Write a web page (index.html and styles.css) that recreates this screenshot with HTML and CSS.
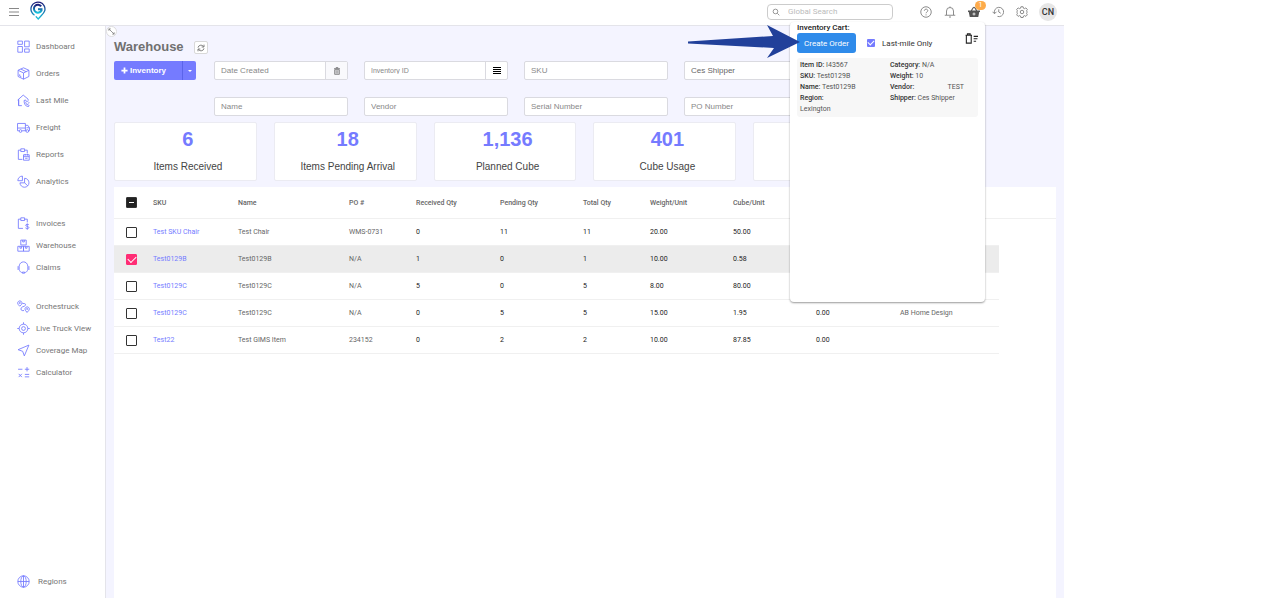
FILE: index.html
```html
<!DOCTYPE html>
<html lang="en">
<head>
    <meta charset="UTF-8">
    <meta name="viewport" content="width=device-width, initial-scale=1.0">
    <title>Warehouse</title>
    <link rel="stylesheet" href="styles.css">
</head>
<body>
    <div class="app">
        <header class="topbar">
            <button class="icon-btn menu-btn" aria-label="Menu">
                <svg viewBox="0 0 12 12"><path d="M1 2.500h10M1 6h10M1 9.500h10"/></svg>
            </button>
            <a href="#" class="logo" aria-label="Home">
                <svg viewBox="0 0 16 19">
                    <defs>
                        <linearGradient id="logoFill" x1="0" y1="0" x2="0" y2="1">
                            <stop offset="0" stop-color="#1d1a78"/>
                            <stop offset="0.5" stop-color="#1668a8"/>
                            <stop offset="1" stop-color="#16c4dc"/>
                        </linearGradient>
                    </defs>
                    <g fill="none" stroke="url(#logoFill)">
                        <path stroke-width="1.3" d="M4.500 14.200 A7 7 0 1 1 14.800 9.600 C14 12.600 11 14.600 8.200 18 L5.800 15.400"/>
                        <path stroke-width="2" d="M11.200 5.400 A4 4 0 1 0 11.500 9.500 L11.500 8.200 L8 8.200"/>
                    </g>
                </svg>
            </a>
            <div class="search">
                <svg viewBox="0 0 12 12"><circle cx="5.200" cy="5.200" r="3.500"/><path d="M8 8l3 3"/></svg>
                <input type="search" placeholder="Global Search" aria-label="Global Search">
            </div>
            <nav class="tools">
                <button class="icon-btn" aria-label="Help">
                    <svg viewBox="0 0 24 24"><circle cx="12" cy="12" r="10.500"/><path d="M8.700 9.500c0-4.500 6.800-4.200 6.800-.2 0 2.700-3.400 2.600-3.400 5.200M12.100 16.800v2"/></svg>
                </button>
                <button class="icon-btn" aria-label="Notifications">
                    <svg viewBox="0 0 24 24"><path d="M12 1v2M5 18v-8a7 7 0 0 1 14 0v8M1.500 18.500h21M10 22h4"/></svg>
                </button>
                <button class="icon-btn basket" aria-label="Inventory cart">
                    <svg viewBox="0 0 24 24"><path fill="#555" stroke="none" d="M5.500 9 10.500 1.500 12.300 2.700 8.200 9h7.600L11.700 2.700 13.500 1.500 18.500 9H24v3h-1.500L20.500 22h-17L1.500 12H0V9z"/><path stroke="#fff" d="M12 13v6M9 16h6"/></svg>
                    <span class="badge">1</span>
                </button>
                <button class="icon-btn" aria-label="History">
                    <svg viewBox="0 0 24 24"><path d="M5 14.500A9.300 9.300 0 1 1 11 20.800M1 11.500l4 4 4-4M13.500 6.500V12l4 2.500"/></svg>
                </button>
                <button class="icon-btn" aria-label="Settings">
                    <svg viewBox="0 0 24 24"><circle cx="12" cy="12" r="3.500"/><path d="M9.800 1.500h4.400l.8 3 2 .8 2.700-1.500 3 3-1.500 2.700.8 2v1.500l-.8 2 1.500 2.700-3 3-2.700-1.500-2 .8-.8 3H9.800l-.8-3-2-.8-2.700 1.500-3-3L2.800 15 2 13v-1.500l.8-2-1.500-2.700 3-3L7 5.300l2-.8z"/></svg>
                </button>
                <button class="avatar">CN</button>
            </nav>
        </header>

        <aside class="sidebar">
            <ul class="nav nav-main">
                <li><a href="#"><svg viewBox="0 0 24 24"><path d="M1.500 2h8.500v6H1.500zM1.500 12h8.500v10.500H1.500zM14 2h8.500v10.500H14zM14 16.500h8.500v6H14z"/></svg>Dashboard</a></li>
                <li><a href="#"><svg viewBox="0 0 24 24"><path d="M12 1.500l10 4.500v11.500l-10 5-10-5V6zM2 6l10 5 10-5M12 11v11.500M7 3.700l10 5M5 13.500v3l3 1.500"/></svg>Orders</a></li>
                <li><a href="#"><svg viewBox="0 0 24 24"><path d="M9 21.500H3v-11L1.500 11 11.500 2l9 7.500V12M3 21.500V10M13 12l3-1 1.500 3.500-1.500 1.500 2.500 4 2-.5 2 2.500-2.500 1.500c-4-1-7-5-7-11.500zM19 14l2-1M20 17l3-1"/></svg>Last Mile</a></li>
                <li><a href="#"><svg viewBox="0 0 24 24"><path d="M1 4.500h14.500V18H9.500M3.500 18H1V4.500M15.500 8h4.500l3 4.500V18h-1.500M15.500 18H17M1 13h14.500M17.500 12.500H23"/><circle cx="6.500" cy="18.500" r="2.500"/><circle cx="19" cy="18.500" r="2.500"/></svg>Freight</a></li>
                <li><a href="#"><svg viewBox="0 0 24 24"><path d="M10 21H2.500V4H7M14 4h5v6M7 1.500h7v5H7zM12 12.500h10.500v10H12zM12 16h10.500M15 11v3M19.500 11v3M15 19h4.500"/></svg>Reports</a></li>
                <li><a href="#"><svg viewBox="0 0 24 24"><path d="M14 6a8.300 8.300 0 1 1-8.500 8.500L14 14.500zM10 10.500V2a8.500 8.500 0 0 0-8.500 8.500zM14 14.500l6 5.500"/></svg>Analytics</a></li>
            </ul>
            <ul class="nav">
                <li><a href="#"><svg viewBox="0 0 24 24"><path d="M11 21H2.500V4H7M14 4h5v6M7 1.500h7v5H7zM22 14.500c-1-1.500-6-1.500-6 .8 0 2.500 6 1.500 6 4.200 0 2.500-5 2.500-6.500.5M19 12v11.500"/></svg>Invoices</a></li>
                <li><a href="#"><svg viewBox="0 0 24 24"><path d="M7 2h10v9H7zM1.500 13.500H12v9H1.500zM12 13.500h10.500v9H12zM10.500 2v3.500h3V2M5.500 13.500V17h3v-3.500M15.500 13.500V17h3v-3.500"/></svg>Warehouse</a></li>
                <li><a href="#"><svg viewBox="0 0 24 24"><path d="M4 9.500C5 -1 19 -1 20 9.500M4 9.500v7M2 9.500v7M20 9.500v7M22 9.500v7M4.500 17c1 3 3 4 5.500 4.500M19.500 17c-1 3-3 4-5.500 4.500M10 20.500h4v2h-4z"/></svg>Claims</a></li>
            </ul>
            <ul class="nav">
                <li><a href="#"><svg viewBox="0 0 24 24"><path d="M5 11.500 2 8a4 4 0 1 1 6.500 0zM18.500 23l-3-4a4 4 0 1 1 6.500 0zM10 6.500h3.500c3 0 3 4 0 5l-4 1.500c-3 1.500-3 6 0 6.500H13"/><circle cx="5.200" cy="5.500" r="1"/><circle cx="18.700" cy="16.500" r="1"/></svg>Orchestruck</a></li>
                <li><a href="#"><svg viewBox="0 0 24 24"><circle cx="12" cy="12" r="8"/><circle cx="12" cy="12" r="3.500"/><path d="M12 .5V4M12 20v3.500M.5 12H4M20 12h3.500"/></svg>Live Truck View</a></li>
                <li><a href="#"><svg viewBox="0 0 24 24"><path d="M22 2 2 10.500l8.500 3L13.500 22z"/></svg>Coverage Map</a></li>
                <li><a href="#"><svg viewBox="0 0 24 24"><path d="M2 6h8M14.500 6h8M18.500 2v8M3 14.500l6 6M9 14.500l-6 6M14.500 15.500h8M14.500 20h8"/></svg>Calculator</a></li>
            </ul>
            <ul class="nav nav-bottom">
                <li><a href="#"><svg viewBox="0 0 24 24"><circle cx="12" cy="12" r="10.500"/><ellipse cx="12" cy="12" rx="5" ry="10.500"/><path d="M1.500 12h21M12 1.500v21"/></svg>Regions</a></li>
            </ul>
        </aside>

        <main class="content">
            <button class="collapse" aria-label="Collapse sidebar">
                <svg viewBox="0 0 12 12"><path d="M2.500 5V2.500H5M2.500 2.500l7 7M9.500 7v2.500H7"/></svg>
            </button>
            <div class="title-row">
                <h1>Warehouse</h1>
                <button class="refresh" aria-label="Refresh">
                    <svg viewBox="0 0 12 12"><path d="M1.500 5.500a4.500 4.500 0 0 1 8-2M10.500 1v3.500H7M10.500 6.500a4.500 4.500 0 0 1-8 2M1.500 11V7.500H5"/></svg>
                </button>
            </div>

            <form class="filters">
                <div class="split-btn">
                    <button type="button" class="add"><svg viewBox="0 0 8 8"><path d="M4 .5v7M.5 4h7"/></svg>Inventory</button>
                    <button type="button" class="caret" aria-label="More inventory actions"></button>
                </div>
                <div class="field">
                    <input type="text" placeholder="Date Created" aria-label="Date Created">
                    <button type="button" class="clear" aria-label="Clear date">
                        <svg viewBox="0 0 10 12"><path d="M.5 2.500h9M3.500 2V1h3v1M1.500 4h7v7h-7zM3.700 5v5M6.300 5v5"/></svg>
                    </button>
                </div>
                <div class="field small">
                    <input type="text" placeholder="Inventory ID" aria-label="Inventory ID">
                    <button type="button" aria-label="Enter a list">
                        <svg viewBox="0 0 8 8"><path d="M0 .5h8M0 2.500h8M0 4.500h8M0 6.500h8"/></svg>
                    </button>
                </div>
                <div class="field"><input type="text" placeholder="SKU" aria-label="SKU"></div>
                <div class="field"><input type="text" value="Ces Shipper" aria-label="Shipper"></div>
                <div class="field second-row"><input type="text" placeholder="Name" aria-label="Name"></div>
                <div class="field"><input type="text" placeholder="Vendor" aria-label="Vendor"></div>
                <div class="field"><input type="text" placeholder="Serial Number" aria-label="Serial Number"></div>
                <div class="field"><input type="text" placeholder="PO Number" aria-label="PO Number"></div>
            </form>

            <section class="stats">
                <div class="stat"><strong>6</strong><span>Items Received</span></div>
                <div class="stat"><strong>18</strong><span>Items Pending Arrival</span></div>
                <div class="stat"><strong>1,136</strong><span>Planned Cube</span></div>
                <div class="stat"><strong>401</strong><span>Cube Usage</span></div>
                <div class="stat"></div>
            </section>

            <div class="table-box">
                <table>
                    <colgroup>
                        <col class="c-check"><col class="c-sku"><col class="c-name"><col class="c-po">
                        <col class="c-wide"><col class="c-num"><col class="c-po"><col class="c-num">
                        <col class="c-num"><col class="c-wide"><col class="c-vendor"><col>
                    </colgroup>
                    <thead>
                        <tr>
                            <th><input type="checkbox" class="box some" aria-label="Select all"></th>
                            <th>SKU</th><th>Name</th><th>PO #</th><th>Received Qty</th><th>Pending Qty</th>
                            <th>Total Qty</th><th>Weight/Unit</th><th>Cube/Unit</th><th></th><th></th><th></th>
                        </tr>
                    </thead>
                    <tbody>
                        <tr>
                            <td><input type="checkbox" class="box" aria-label="Select Test SKU Chair"></td>
                            <td><a href="#">Test SKU Chair</a></td><td>Test Chair</td><td>WMS-0731</td>
                            <td class="num">0</td><td class="num">11</td><td class="num">11</td><td class="num">20.00</td><td class="num">50.00</td><td></td><td></td><td></td>
                        </tr>
                        <tr class="selected">
                            <td><input type="checkbox" class="box" checked aria-label="Select Test0129B"></td>
                            <td><a href="#">Test0129B</a></td><td>Test0129B</td><td>N/A</td>
                            <td class="num">1</td><td class="num">0</td><td class="num">1</td><td class="num">10.00</td><td class="num">0.58</td><td></td><td></td><td></td>
                        </tr>
                        <tr>
                            <td><input type="checkbox" class="box" aria-label="Select Test0129C"></td>
                            <td><a href="#">Test0129C</a></td><td>Test0129C</td><td>N/A</td>
                            <td class="num">5</td><td class="num">0</td><td class="num">5</td><td class="num">8.00</td><td class="num">80.00</td><td></td><td></td><td></td>
                        </tr>
                        <tr>
                            <td><input type="checkbox" class="box" aria-label="Select Test0129C"></td>
                            <td><a href="#">Test0129C</a></td><td>Test0129C</td><td>N/A</td>
                            <td class="num">0</td><td class="num">5</td><td class="num">5</td><td class="num">15.00</td><td class="num">1.95</td><td class="num">0.00</td><td>AB Home Design</td><td></td>
                        </tr>
                        <tr>
                            <td><input type="checkbox" class="box" aria-label="Select Test22"></td>
                            <td><a href="#">Test22</a></td><td>Test GIMS Item</td><td>234152</td>
                            <td class="num">0</td><td class="num">2</td><td class="num">2</td><td class="num">10.00</td><td class="num">87.85</td><td class="num">0.00</td><td></td><td></td>
                        </tr>
                    </tbody>
                </table>
            </div>
        </main>

        <section class="cart">
            <h2>Inventory Cart:</h2>
            <div class="cart-bar">
                <button class="create">Create Order</button>
                <label class="lastmile"><input type="checkbox" checked>Last-mile Only</label>
                <button class="empty" aria-label="Empty cart">
                    <svg viewBox="0 0 24 20"><path d="M1 4h12M4.500 3V1.500h5V3M2.500 4h9v14.500h-9zM16 6h8M16 10.500h7M16 15h4.500"/></svg>
                </button>
            </div>
            <div class="cart-item">
                <div>
                    <p><b>Item ID:</b> I43567</p>
                    <p><b>SKU:</b> Test0129B</p>
                    <p><b>Name:</b> Test0129B</p>
                    <p><b>Region:</b></p>
                    <p>Lexington</p>
                </div>
                <div>
                    <p><b>Category:</b> N/A</p>
                    <p><b>Weight:</b> 10</p>
                    <p class="spread"><b>Vendor:</b> <span>TEST</span></p>
                    <p><b>Shipper:</b> Ces Shipper</p>
                </div>
            </div>
        </section>

        <svg class="pointer" viewBox="0 0 114 34"><path d="M1 16.500 L86 11 L80 0 L113 17 L80 33 L87 23 L1 18.500 Z"/></svg>
    </div>
</body>
</html>
```

FILE: styles.css
```css
:root {
    --accent: #757bff;
    --page: #f4f4ff;
    --line: #e4e4ea;
    --muted: #666;
}

* {
    box-sizing: border-box;
}

body {
    margin: 0;
    padding-right: 216px;
    background: #fff;
    color: #333;
    font-family: Roboto, sans-serif;
    font-size: 7px;
}

button,
input {
    font: inherit;
    color: inherit;
    margin: 0;
    padding: 0;
}

button {
    border: 0;
    background: none;
    cursor: pointer;
}

svg {
    display: block;
    fill: none;
    stroke: currentColor;
}

a {
    color: inherit;
    text-decoration: none;
}

h1,
h2,
p,
ul {
    margin: 0;
    padding: 0;
    list-style: none;
}

.app {
    position: relative;
    display: grid;
    grid-template-columns: 106px 1fr;
    grid-template-rows: 26px 1fr;
    min-height: 100vh;
}

/* top bar */
.topbar {
    grid-column: 1 / 3;
    display: flex;
    align-items: center;
    padding: 0 7px 2px 8px;
    border-bottom: 1px solid var(--line);
}

.icon-btn {
    position: relative;
    width: 12px;
    color: #707070;
}

.icon-btn svg {
    width: 12px;
    height: 12px;
    stroke-width: 1.6;
}

.menu-btn svg {
    stroke-width: 1;
    color: #888;
}

.logo {
    align-self: flex-start;
    margin: 1px auto 0 10px;
}

.logo svg {
    width: 16px;
    height: 19px;
}

.search {
    display: flex;
    align-items: center;
    gap: 8px;
    width: 126px;
    height: 16px;
    margin-right: 27px;
    padding: 0 4px;
    border: 1px solid #ccc;
    border-radius: 4px;
    color: #666;
}

.search svg {
    flex: none;
    width: 8px;
    height: 8px;
}

.search input {
    width: 100%;
    border: 0;
    outline: 0;
    background: none;
    font-size: 8px;
}

.search input::placeholder {
    color: #bbb;
}

.tools {
    display: flex;
    align-items: center;
    gap: 12px;
}

.badge {
    position: absolute;
    top: -5px;
    left: 7px;
    width: 11px;
    height: 9px;
    border-radius: 5px;
    background: #fdab4b;
    color: #fff;
    font-size: 7px;
    line-height: 9px;
}

.avatar {
    width: 18px;
    height: 18px;
    margin-left: -1px;
    border-radius: 50%;
    background: #e6e6e6;
    font-size: 9px;
    font-weight: 500;
}

/* side bar */
.sidebar {
    display: flex;
    flex-direction: column;
    gap: 17px;
    padding: 7px 0 6px;
    border-right: 1px solid var(--line);
    color: #777;
    font-size: 8px;
}

.nav a {
    display: flex;
    align-items: center;
    gap: 6px;
    height: 22px;
    padding-left: 17px;
}

.nav svg {
    width: 13px;
    height: 13px;
    color: var(--accent);
    stroke-width: 1.6;
}

.nav-main a {
    height: 27px;
}

.nav-bottom {
    margin-top: auto;
}

.nav-bottom a {
    gap: 8px;
}

/* page */
.content {
    position: relative;
    display: flex;
    flex-direction: column;
    padding: 14px 8px 0;
    background: var(--page);
}

.collapse {
    position: absolute;
    top: 0;
    left: 0;
    width: 11px;
    height: 11px;
    border: 1px solid #ddd;
    border-radius: 50%;
    background: #fff;
    color: #777;
}

.title-row {
    display: flex;
    align-items: center;
    gap: 10px;
    height: 14px;
    margin-bottom: 7px;
}

h1 {
    color: #707070;
    font: bold 13px/14px "Liberation Sans", Arial, sans-serif;
}

.refresh {
    width: 14px;
    height: 13px;
    padding: 2px;
    border: 1px solid #d8d8d8;
    border-radius: 2px;
    background: #fff;
    color: #444;
}

.refresh svg {
    width: 8px;
    height: 8px;
}

/* two rows of filters, the second starts under the date */
.filters {
    display: grid;
    grid-template-columns: 84px 134px repeat(3, 1fr);
    gap: 17px 16px;
    padding-right: 228px;
    font: 8px "Liberation Sans", Arial, sans-serif;
}

.second-row {
    grid-column: 2;
}

.split-btn {
    display: flex;
    width: 82px;
    height: 19px;
    border-radius: 2px;
    background: var(--accent);
    color: #fff;
    font-weight: bold;
}

.add {
    display: flex;
    flex: 1;
    align-items: center;
    gap: 2px;
    padding-left: 7px;
}

.add svg {
    width: 7px;
    height: 7px;
    stroke-width: 2;
}

.caret {
    display: grid;
    place-items: center;
    width: 14px;
    border-left: 1px solid #5b64ea;
}

.caret::after {
    content: "";
    border: 2px solid transparent;
    border-top-color: #fff;
    border-bottom: 0;
}

.field {
    display: flex;
    height: 19px;
    border: 1px solid #dadae0;
    border-radius: 2px;
    background: #fff;
    color: #666;
}

.field input {
    flex: 1;
    width: 0;
    padding: 0 6px;
    border: 0;
    outline: 0;
    background: none;
}

.field input::placeholder {
    color: #888;
}

.field.small {
    font-size: 7px;
}

.field button {
    display: grid;
    place-items: center;
    width: 22px;
    border-left: 1px solid #dadae0;
    color: #000;
}

.field button svg {
    width: 8px;
    height: 8px;
}

.field .clear {
    background: #f9f9fc;
    color: #555;
}

.stats {
    display: grid;
    grid-template-columns: repeat(6, 1fr);
    gap: 17px;
    margin: 6px 0;
    font-family: "Liberation Sans", Arial, sans-serif;
}

.stat {
    display: flex;
    flex-direction: column;
    align-items: center;
    gap: 11px;
    height: 59px;
    padding: 5px 0 0 5px;
    border: 1px solid #ebebf2;
    border-radius: 2px;
    background: #fff;
}

.stat strong {
    color: var(--accent);
    font-size: 20px;
    line-height: 22px;
}

.stat span {
    color: #444;
    font-size: 10px;
    line-height: 12px;
}

/* table */
.table-box {
    flex: 1;
    background: #fff;
}

table {
    width: 100%;
    border-collapse: separate;
    border-spacing: 0;
    table-layout: fixed;
}

.c-check { width: 39px; }
.c-sku { width: 85px; }
.c-name { width: 111px; }
.c-po { width: 67px; }
.c-num { width: 83px; }
.c-wide { width: 84px; }
.c-vendor { width: 99px; }

th,
td {
    padding: 0;
    border-bottom: 1px solid #f0f0f0;
    text-align: left;
    white-space: nowrap;
    color: var(--muted);
}

th {
    height: 32px;
    font-size: 7px;
    font-weight: 500;
}

td {
    height: 27px;
}

td:last-child {
    border: 0;
}

td.num {
    color: #222;
}

td a {
    color: var(--accent);
}

.selected td:not(:last-child) {
    background: #ececec;
}

.box {
    appearance: none;
    display: grid;
    place-items: center;
    width: 11px;
    height: 11px;
    margin-left: 12px;
    border: 1px solid #333;
    border-radius: 1px;
}

.box.some {
    background: #222;
}

.box.some::after {
    content: "";
    width: 5px;
    height: 1px;
    background: #fff;
}

.box:checked {
    border-color: #ff2d75;
    background: #ff2d75;
}

.box:checked::after,
.lastmile input:checked::after {
    content: "";
    width: 7px;
    height: 4px;
    border: solid #fff;
    border-width: 0 0 1px 1px;
    transform: translateY(-1px) rotate(-45deg);
}

/* cart pop-up */
.cart {
    position: absolute;
    top: 22px;
    right: 79px;
    width: 195px;
    height: 280px;
    padding: 0 7px;
    border-radius: 4px;
    background: #fff;
    box-shadow: 0 1px 2px rgba(0, 0, 0, 0.4);
}

.cart h2 {
    color: #222;
    font-size: 8px;
    font-weight: 500;
    line-height: 11px;
}

.cart-bar {
    display: flex;
    align-items: center;
    height: 20px;
    font-size: 8px;
}

.create {
    width: 59px;
    height: 20px;
    border-radius: 3px;
    background: #2f8bea;
    color: #fff;
}

.lastmile {
    display: flex;
    align-items: center;
    gap: 7px;
    margin: 0 auto 0 11px;
}

.lastmile input {
    appearance: none;
    display: grid;
    place-items: center;
    width: 8px;
    height: 8px;
    border-radius: 1px;
    background: var(--accent);
}

.lastmile input:checked::after {
    width: 5px;
    height: 3px;
}

.empty {
    align-self: flex-start;
    color: #222;
}

.empty svg {
    width: 13px;
    height: 11px;
    stroke-width: 2;
}

.cart-item {
    display: grid;
    grid-template-columns: 90px 1fr;
    margin-top: 5px;
    padding: 2px 3px;
    border-radius: 3px;
    background: #f7f7f7;
    color: #555;
    line-height: 11px;
}

.cart-item b {
    color: #333;
    font-weight: 500;
}

.cart-item p {
    min-height: 11px;
}

.spread {
    display: flex;
    justify-content: space-between;
    padding-right: 11px;
}

/* arrow over the cart */
.pointer {
    position: absolute;
    top: 25px;
    right: 263px;
    width: 114px;
    height: 34px;
    fill: #21409a;
    stroke: none;
}
```
